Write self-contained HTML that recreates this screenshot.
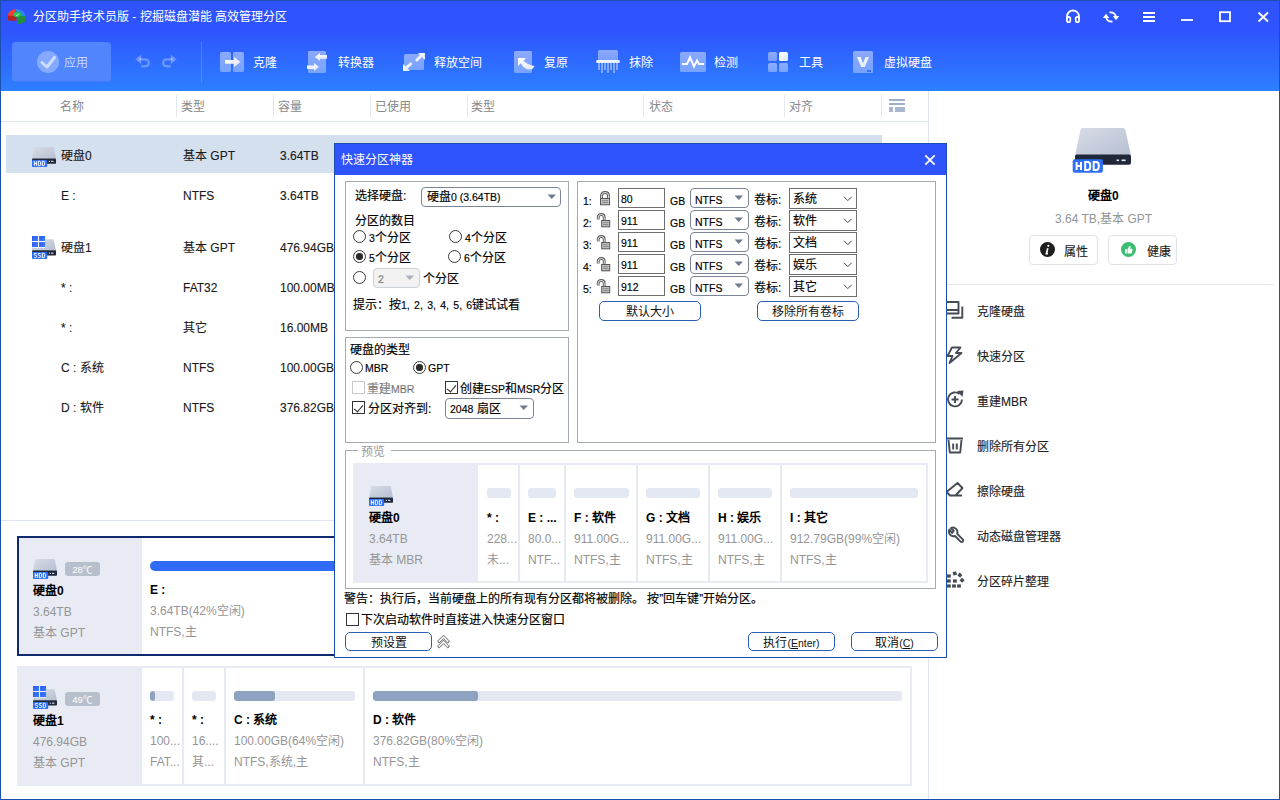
<!DOCTYPE html>
<html lang="zh-CN"><head><meta charset="utf-8">
<style>
*{box-sizing:border-box;margin:0;padding:0}
html,body{width:1280px;height:800px;overflow:hidden;background:#fff}
body{position:relative;font-family:"Liberation Sans",sans-serif;font-size:12px;line-height:14px;color:#222}
.a{position:absolute;white-space:nowrap}
#hdr{position:absolute;left:0;top:0;width:1280px;height:91px;background:linear-gradient(#2f54ff 0px,#2f54ff 30px,#2c80ff 91px)}
.wb{position:absolute;background:#1b50b0}
.tb{color:#fff;font-size:12px}
.col{color:#888;font-size:12px}
.sep{position:absolute;width:1px;background:#e3e7ee}
.row{color:#1a1a1a;font-size:12px;-webkit-text-stroke:0.12px #1a1a1a}
.gray{color:#8a8a8a}
.gb{border:1px solid #a5abb3}

.d{font-size:12px;color:#000;-webkit-text-stroke:0.15px #000}
.n{font-size:10.5px}
.cb{border:1px solid #7a8696;border-radius:4px;background:#fff}
.ip{border:1px solid #6e6e6e;background:#fff}
.rd{width:13px;height:13px;border:1.2px solid #3a3a3a;border-radius:50%;background:#fff}
.rd.on::after{content:"";position:absolute;left:2.3px;top:2.3px;width:6.5px;height:6.5px;border-radius:50%;background:#2a2a2a}
.ck{width:13px;height:13px;border:1px solid #333;background:#fff}
.ck.dis{border-color:#c8c8c8}
.ck.on::after{content:"";position:absolute;left:3px;top:0.5px;width:4px;height:8px;border:solid #222;border-width:0 1.3px 1.3px 0;transform:rotate(40deg)}
.bt{border:1px solid #2b5fb5;border-radius:5px;background:#fff;text-align:center;line-height:18px;padding-top:1px;font-size:12px;color:#111}
.pb{font-size:12px;font-weight:bold;color:#000}
.pg{font-size:12px;color:#959595}
.badge{width:35px;height:14px;border-radius:3px;background:#b7bfcc;color:#fff;font-size:9.5px;line-height:15px;text-align:center}
.rbtn{border:1px solid #dfe3ea;border-radius:4px;background:#fff}
.bold{font-weight:bold;color:#111}
</style></head><body>
<div id="hdr"></div>
<svg width="0" height="0" style="position:absolute"><defs>
 <linearGradient id="hg" x1="0" y1="0" x2="1" y2="1"><stop offset="0" stop-color="#d8dde7"/><stop offset="1" stop-color="#b6bed0"/></linearGradient>
 <linearGradient id="wq" x1="0" y1="0" x2="1" y2="1"><stop offset="0" stop-color="#2a55f5"/><stop offset="1" stop-color="#3a86f7"/></linearGradient>
 <symbol id="hdds" viewBox="0 0 24 20" overflow="visible">
  <path d="M2.8 0 L20.8 0 Q21.6 0 21.8 1 L24 11.6 L0.1 11.6 L2 1 Q2.2 0 2.8 0Z" fill="url(#hg)"/>
  <rect x="0.1" y="11.4" width="23.9" height="5.3" rx="0.8" fill="#1f2739"/>
  <rect x="16.8" y="13.8" width="1.2" height="1.1" fill="#dfe6f5"/><rect x="19" y="13.8" width="2.4" height="1.1" fill="#dfe6f5"/>
  <rect x="0" y="12.9" width="15.2" height="7.1" rx="1.1" fill="#2d6ff6"/>
  <g stroke="#fff" stroke-width="1" fill="none"><path d="M2.3 14.2 V18.8 M4.3 14.2 V18.8 M2.3 16.5 H4.3"/><path d="M6.3 14.2 H7.2 Q8.6 14.2 8.6 15.6 V17.4 Q8.6 18.8 7.2 18.8 H6.3 Z"/><path d="M10.3 14.2 H11.2 Q12.6 14.2 12.6 15.6 V17.4 Q12.6 18.8 11.2 18.8 H10.3 Z"/></g>
 </symbol>
 <symbol id="ssds" viewBox="0 0 24 23" overflow="visible">
  <path d="M13 3.2 L20.8 3.2 Q21.6 3.2 21.8 4.2 L24 14.4 L0.1 14.4 L0.1 12 L13 12 Z" fill="url(#hg)"/>
  <rect x="0" y="0" width="6" height="5" fill="url(#wq)"/><rect x="7.1" y="0" width="6" height="5" fill="url(#wq)"/><rect x="0" y="6.1" width="6" height="5" fill="url(#wq)"/><rect x="7.1" y="6.1" width="6" height="5" fill="url(#wq)"/>
  <rect x="0.1" y="14.2" width="23.9" height="5.3" rx="0.8" fill="#1f2739"/>
  <rect x="16.8" y="16.6" width="1.2" height="1.1" fill="#dfe6f5"/><rect x="19" y="16.6" width="2.4" height="1.1" fill="#dfe6f5"/>
  <rect x="0" y="15.9" width="15.2" height="7.1" rx="1.1" fill="#2d6ff6"/>
  <g stroke="#fff" stroke-width="1" fill="none"><path d="M4.6 17.4 H2.9 Q2.2 17.4 2.2 18.3 Q2.2 19.3 3.4 19.3 Q4.6 19.3 4.6 20.4 Q4.6 21.6 3.6 21.6 H2.2"/><path d="M8.6 17.4 H6.9 Q6.2 17.4 6.2 18.3 Q6.2 19.3 7.4 19.3 Q8.6 19.3 8.6 20.4 Q8.6 21.6 7.6 21.6 H6.2"/><path d="M10.3 17.2 H11.2 Q12.6 17.2 12.6 18.6 V20.4 Q12.6 21.8 11.2 21.8 H10.3 Z"/></g>
 </symbol>
 <symbol id="hddbig" viewBox="0 0 60 46" overflow="visible">
  <path d="M10.5 1 L51 1 Q53 1 53.4 3 L59 28.8 L3 28.8 L8.4 3 Q8.8 1 10.5 1Z" fill="url(#hg)"/>
  <rect x="3" y="27.5" width="56" height="10.3" rx="2" fill="#1f2739"/>
  <rect x="44.6" y="32.5" width="2.4" height="1.6" fill="#e4eaf7"/><rect x="49.6" y="32.5" width="4" height="1.6" fill="#e4eaf7"/>
  <rect x="0.7" y="32.3" width="30.2" height="13.4" rx="2" fill="#2d6ff6"/>
  <g stroke="#fff" stroke-width="2" fill="none"><path d="M4.6 35 V43 M9 35 V43 M4.6 39 H9"/><path d="M13.2 35 H15.5 Q18.2 35 18.2 37.8 V40.2 Q18.2 43 15.5 43 H13.2 Z"/><path d="M21.7 35 H24 Q26.7 35 26.7 37.8 V40.2 Q26.7 43 24 43 H21.7 Z"/></g>
 </symbol>
</defs></svg>

<!-- title -->
<div class="a tb" style="left:33px;top:10px;font-size:12px">分区助手技术员版 - 挖掘磁盘潜能 高效管理分区</div>


<!-- toolbar -->
<svg class="a" style="left:0;top:0" width="1280" height="91" viewBox="0 0 1280 91">
 <defs>
  <linearGradient id="ig" x1="0" y1="0" x2="0" y2="1"><stop offset="0" stop-color="#fff" stop-opacity="0.45"/><stop offset="1" stop-color="#fff" stop-opacity="0.35"/></linearGradient>
  <linearGradient id="wg" x1="0" y1="0" x2="1" y2="1"><stop offset="0" stop-color="#fff"/><stop offset="1" stop-color="#dfe6f6"/></linearGradient>
 </defs>
 <!-- logo -->
 <path d="M16 9 Q24.5 9 25.8 16.5 L16 16.5 Z" fill="#2d86ea"/>
 <path d="M8 14.5 Q9 10 15.5 9 L16 16 L8 16Z" fill="#f0403a"/>
 <path d="M8 15.5 L16.5 16 L16.5 20.5 Q11 21 8 20.5Z" fill="#b8231f"/>
 <path d="M17 16.2 L25 16 L25 22 Q21.5 24 17 24Z" fill="#20903e"/>
 <ellipse cx="17.2" cy="14.6" rx="4" ry="2.6" fill="#1fc24a"/>
 <path d="M15.6 14.8 L16.8 15.8 L18.8 13.6" stroke="#e8ffe8" stroke-width="0.9" fill="none"/>
 <!-- apply button -->
 <rect x="12" y="42" width="99" height="40" rx="4" fill="#5085fe"/>
 <rect x="14" y="81" width="95" height="1" fill="#2a5ad8" fill-opacity="0.25"/>
 <circle cx="48" cy="62" r="11" fill="#fff" fill-opacity="0.3"/>
 <path d="M42 62.5 L47 67 L54.5 57.5" stroke="#fff" stroke-opacity="0.6" stroke-width="3" fill="none" stroke-linecap="round" stroke-linejoin="round"/>
 <!-- undo redo -->
 <g stroke="#fff" stroke-opacity="0.3" stroke-width="2.2" fill="none" stroke-linecap="round">
  <path d="M140 59.3 L144.5 59.3 Q148.8 59.3 148.8 62.8 Q148.8 66.3 144.5 66.3 L142 66.3"/>
  <path d="M172 59.3 L167.5 59.3 Q163.2 59.3 163.2 62.8 Q163.2 66.3 167.5 66.3 L170 66.3"/>
 </g>
 <g fill="#fff" fill-opacity="0.3">
  <path d="M135.3 59.3 L141.2 54.6 L141.2 64 Z"/>
  <path d="M176.7 59.3 L170.8 54.6 L170.8 64 Z"/>
 </g>
 <rect x="201" y="42" width="1" height="40" fill="#fff" fill-opacity="0.18"/>
 <!-- clone -->
 <rect x="220" y="52" width="11" height="20" rx="1.5" fill="url(#ig)"/>
 <rect x="233" y="52" width="11" height="20" rx="1.5" fill="url(#ig)"/>
 <path d="M225 60 L234 60 L234 56.8 L240.5 62 L234 67 L234 63.8 L225 63.8Z" fill="url(#wg)"/>
 <!-- converter -->
 <rect x="308" y="51" width="18" height="22" rx="1.5" fill="url(#ig)"/>
 <path d="M327 55 L320 55 L320 53 L315 57 L320 61 L320 58.8 L327 58.8Z" fill="url(#wg)"/>
 <path d="M307 65.4 L314 65.4 L314 63 L319 67 L314 71 L314 68.9 L307 68.9Z" fill="url(#wg)"/>
 <!-- free space -->
 <rect x="404" y="54" width="20" height="16" rx="1.5" fill="url(#ig)"/>
 <path d="M418 53 L425 53 L425 60 Z" fill="url(#wg)"/>
 <path d="M403 64 L403 71 L410 71 Z" fill="url(#wg)"/>
  <path d="M406 68 L410.8 63.8" stroke="#e8eef8" stroke-width="3" stroke-linecap="round"/>
 <path d="M420.5 56.5 L416.8 60" stroke="#eef2fb" stroke-width="3" stroke-linecap="round"/>
 <!-- restore -->
 <rect x="514" y="51" width="18" height="22" rx="1.5" fill="url(#ig)"/>
 <path d="M518 58 L526 58 L523.5 60.8 Q528 65 534.5 66 Q533 70 529 69.5 Q524 69 520.8 63.2 L518 66 Z" fill="url(#wg)"/>
 <!-- wipe -->
 <rect x="598" y="50" width="20" height="11" rx="1.5" fill="url(#ig)"/>
 <g fill="#fff" fill-opacity="0.4">
  <rect x="598" y="63" width="2" height="7"/><rect x="601" y="63" width="2" height="10"/><rect x="604" y="63" width="2" height="7"/><rect x="607" y="63" width="2" height="10"/><rect x="610" y="63" width="2" height="7"/><rect x="613" y="63" width="2" height="10"/><rect x="616" y="63" width="2" height="7"/>
 </g>
 <rect x="596" y="60" width="24" height="3" rx="1.5" fill="url(#wg)"/>
 <!-- detect -->
 <rect x="680" y="52" width="26" height="20" rx="1.5" fill="url(#ig)"/>
 <path d="M682 64 L687 64 L690 57.5 L694 66.5 L697 60.5 L699 64 L704 64" stroke="#fff" stroke-width="2" fill="none" stroke-linejoin="miter"/>
 <!-- tools -->
 <rect x="768" y="52" width="9" height="9" rx="1.5" fill="url(#ig)"/>
 <rect x="779" y="52" width="9" height="9" rx="1.5" fill="url(#wg)"/>
 <rect x="768" y="63" width="9" height="9" rx="1.5" fill="url(#ig)"/>
 <rect x="779" y="63" width="9" height="9" rx="1.5" fill="url(#ig)"/>
 <!-- virtual disk -->
 <rect x="853" y="51" width="20" height="22" rx="1.5" fill="url(#ig)"/>
 <path d="M857 57 L860.5 57 L863 63.5 L865.5 57 L869 57 L864.8 67 L861.2 67Z" fill="url(#wg)"/>
 <rect x="867" y="70" width="4" height="2" fill="#2f6af5" fill-opacity="0.9"/>
 <!-- window controls -->
 <g stroke="#fff" stroke-width="1.8" fill="none">
  <path d="M1067 19.5 L1067 16.5 A6 6 0 0 1 1079 16.5 L1079 19.5"/>
  <rect x="1066.9" y="16.9" width="3.4" height="5.2" rx="1.7" stroke-width="1.7"/>
  <rect x="1075.7" y="16.9" width="3.4" height="5.2" rx="1.7" stroke-width="1.7"/>
  <path d="M1109.5 12.5 Q1114.5 12 1116 16.5"/>
  <path d="M1112.5 21.6 Q1107.5 22 1106 17.5"/>
  <path d="M1143 13 L1155 13 M1143 17 L1155 17 M1143 21 L1155 21"/>
  <path d="M1181 20 L1193 20"/>
  <rect x="1220" y="12.2" width="10" height="9"/>
  <path d="M1258.5 12.5 L1268 21.5 M1268 12.5 L1258.5 21.5"/>
 </g>
 <path d="M1112.8 16 L1119.2 16 L1116 20.3 Z" fill="#fff"/>
 <path d="M1102.8 18 L1109.2 18 L1106 13.7 Z" fill="#fff"/>
</svg>
<div class="a tb" style="left:64px;top:56px;color:rgba(255,255,255,0.7)">应用</div>
<div class="a tb" style="left:253px;top:56px">克隆</div>
<div class="a tb" style="left:338px;top:56px">转换器</div>
<div class="a tb" style="left:434px;top:56px">释放空间</div>
<div class="a tb" style="left:544px;top:56px">复原</div>
<div class="a tb" style="left:629px;top:56px">抹除</div>
<div class="a tb" style="left:714px;top:56px">检测</div>
<div class="a tb" style="left:799px;top:56px">工具</div>
<div class="a tb" style="left:884px;top:56px">虚拟硬盘</div>

<!-- column header -->
<div class="a col" style="left:60px;top:100px">名称</div>
<div class="a col" style="left:181px;top:100px">类型</div>
<div class="a col" style="left:278px;top:100px">容量</div>
<div class="a col" style="left:375px;top:100px">已使用</div>
<div class="a col" style="left:471px;top:100px">类型</div>
<div class="a col" style="left:649px;top:100px">状态</div>
<div class="a col" style="left:789px;top:100px">对齐</div>
<div class="sep" style="left:176px;top:95px;height:22px"></div>
<div class="sep" style="left:273px;top:95px;height:22px"></div>
<div class="sep" style="left:370px;top:95px;height:22px"></div>
<div class="sep" style="left:467px;top:95px;height:22px"></div>
<div class="sep" style="left:643px;top:95px;height:22px"></div>
<div class="sep" style="left:784px;top:95px;height:22px"></div>
<div class="sep" style="left:881px;top:95px;height:22px"></div>
<div class="a" style="left:0;top:121px;width:928px;height:1px;background:#dfe5ee"></div>
<svg class="a" style="left:889px;top:99px" width="16" height="13"><rect x="0" y="0" width="16" height="2" fill="#9fb0ca"/><rect x="0" y="4" width="16" height="2" fill="#9fb0ca"/><rect x="0" y="8" width="4" height="5" fill="#a9b8d0"/><rect x="6" y="8" width="10" height="5" fill="#a9b8d0"/></svg>
<div class="a" style="left:928px;top:91px;width:1px;height:709px;background:#dfe5ee"></div>

<!-- selected row -->
<div class="a" style="left:6px;top:135px;width:876px;height:38px;background:#d5e0ef"></div>
<div class="a row" style="left:61px;top:149px">硬盘0</div>
<div class="a row" style="left:183px;top:149px">基本 GPT</div>
<div class="a row" style="left:280px;top:149px">3.64TB</div>

<div class="a row" style="left:61px;top:189px">E :</div>
<div class="a row" style="left:183px;top:189px">NTFS</div>
<div class="a row" style="left:280px;top:189px">3.64TB</div>

<div class="a row" style="left:61px;top:241px">硬盘1</div>
<div class="a row" style="left:183px;top:241px">基本 GPT</div>
<div class="a row" style="left:280px;top:241px">476.94GB</div>

<div class="a row" style="left:61px;top:281px">* :</div>
<div class="a row" style="left:183px;top:281px">FAT32</div>
<div class="a row" style="left:280px;top:281px">100.00MB</div>

<div class="a row" style="left:61px;top:321px">* :</div>
<div class="a row" style="left:183px;top:321px">其它</div>
<div class="a row" style="left:280px;top:321px">16.00MB</div>

<div class="a row" style="left:61px;top:361px">C : 系统</div>
<div class="a row" style="left:183px;top:361px">NTFS</div>
<div class="a row" style="left:280px;top:361px">100.00GB</div>

<div class="a row" style="left:61px;top:401px">D : 软件</div>
<div class="a row" style="left:183px;top:401px">NTFS</div>
<div class="a row" style="left:280px;top:401px">376.82GB</div>

<div class="a" style="left:0;top:520px;width:928px;height:1px;background:#dfe5ee"></div>



<!-- list icons -->
<svg class="a" style="left:32px;top:147px" width="24" height="20"><use href="#hdds"/></svg>
<svg class="a" style="left:32px;top:236px" width="24" height="23"><use href="#ssds"/></svg>

<!-- bottom disk cards -->
<div class="a" style="left:17px;top:536px;width:895px;height:120px;border:2px solid #0f2a6e;background:#fff"></div>
<div class="a" style="left:19px;top:538px;width:123px;height:116px;background:#e8ebf3"></div>
<svg class="a" style="left:33px;top:559px" width="24" height="20"><use href="#hdds"/></svg>
<div class="a badge" style="left:65px;top:562px">28℃</div>
<div class="a pb" style="left:33px;top:584px">硬盘0</div>
<div class="a pg" style="left:33px;top:605px">3.64TB</div>
<div class="a pg" style="left:33px;top:626px">基本 GPT</div>
<div class="a" style="left:150px;top:561px;width:752px;height:10px;border-radius:5px;background:#2f6bf5"></div>
<div class="a pb" style="left:150px;top:583px">E :</div>
<div class="a pg" style="left:150px;top:604px">3.64TB(42%空闲)</div>
<div class="a pg" style="left:150px;top:625px">NTFS,主</div>

<div class="a" style="left:17px;top:666px;width:895px;height:120px;background:#e8ebf3"></div>
<div class="a" style="left:142px;top:668px;width:768px;height:116px;background:#fff"></div>
<div class="a" style="left:182px;top:668px;width:2px;height:116px;background:#e6eaf2"></div>
<div class="a" style="left:224px;top:668px;width:2px;height:116px;background:#e6eaf2"></div>
<div class="a" style="left:363px;top:668px;width:2px;height:116px;background:#e6eaf2"></div>
<svg class="a" style="left:33px;top:686px" width="24" height="23"><use href="#ssds"/></svg>
<div class="a badge" style="left:65px;top:692px">49℃</div>
<div class="a pb" style="left:33px;top:714px">硬盘1</div>
<div class="a pg" style="left:33px;top:735px">476.94GB</div>
<div class="a pg" style="left:33px;top:756px">基本 GPT</div>
<div class="a" style="left:150px;top:691px;width:24px;height:10px;border-radius:3px;background:#e3e8f2;overflow:hidden"><div style="width:5px;height:10px;border-radius:3px;background:#8da2bf"></div></div>
<div class="a pb" style="left:150px;top:713px">* :</div>
<div class="a pg" style="left:150px;top:734px">100...</div>
<div class="a pg" style="left:150px;top:755px">FAT...</div>
<div class="a" style="left:192px;top:691px;width:24px;height:10px;border-radius:3px;background:#e3e8f2;overflow:hidden"></div>
<div class="a pb" style="left:192px;top:713px">* :</div>
<div class="a pg" style="left:192px;top:734px">16....</div>
<div class="a pg" style="left:192px;top:755px">其...</div>
<div class="a" style="left:234px;top:691px;width:121px;height:10px;border-radius:3px;background:#e3e8f2;overflow:hidden"><div style="width:41px;height:10px;border-radius:3px;background:#8da2bf"></div></div>
<div class="a pb" style="left:234px;top:713px">C : 系统</div>
<div class="a pg" style="left:234px;top:734px">100.00GB(64%空闲)</div>
<div class="a pg" style="left:234px;top:755px">NTFS,系统,主</div>
<div class="a" style="left:373px;top:691px;width:529px;height:10px;border-radius:3px;background:#e3e8f2;overflow:hidden"><div style="width:105px;height:10px;border-radius:3px;background:#8da2bf"></div></div>
<div class="a pb" style="left:373px;top:713px">D : 软件</div>
<div class="a pg" style="left:373px;top:734px">376.82GB(80%空闲)</div>
<div class="a pg" style="left:373px;top:755px">NTFS,主</div>


<!-- right panel -->
<svg class="a" style="left:1072px;top:127px" width="60" height="46"><use href="#hddbig"/></svg>
<div class="a pb" style="left:1088px;top:189px">硬盘0</div>
<div class="a pg" style="left:1055px;top:212px">3.64 TB,基本 GPT</div>
<div class="a rbtn" style="left:1029px;top:235px;width:69px;height:30px"></div>
<svg class="a" style="left:1039px;top:241px" width="17" height="17"><circle cx="8.5" cy="8.5" r="7.5" fill="#1f1f1f"/><circle cx="9.3" cy="4.8" r="1.1" fill="#fff"/><path d="M8.8 7.2 L7.4 12.6 L9 12.6" stroke="#fff" stroke-width="1.7" fill="none"/></svg>
<div class="a row" style="left:1064px;top:245px">属性</div>
<div class="a rbtn" style="left:1108px;top:235px;width:69px;height:30px"></div>
<svg class="a" style="left:1120px;top:241px" width="17" height="17"><circle cx="8.5" cy="8.5" r="7.5" fill="#3dbd72"/><path d="M5 8 L6.8 8 L6.8 12.5 L5 12.5Z M7.5 12.5 L7.5 8 L9.5 5 Q10.5 4.5 10.5 6 L10 7.8 L12 7.8 Q12.8 8 12.5 9 L11.8 12 Q11.5 12.5 11 12.5Z" fill="#fff"/></svg>
<div class="a row" style="left:1147px;top:245px">健康</div>
<div class="a" style="left:947px;top:284px;width:327px;height:1px;background:#e3e8f0"></div>
<div class="a row" style="left:977px;top:305px;color:#222">克隆硬盘</div>
<div class="a row" style="left:977px;top:350px;color:#222">快速分区</div>
<div class="a row" style="left:977px;top:395px;color:#222">重建MBR</div>
<div class="a row" style="left:977px;top:440px;color:#222">删除所有分区</div>
<div class="a row" style="left:977px;top:485px;color:#222">擦除硬盘</div>
<div class="a row" style="left:977px;top:530px;color:#222">动态磁盘管理器</div>
<div class="a row" style="left:977px;top:575px;color:#222">分区碎片整理</div>
<svg class="a" style="left:940px;top:290px" width="35" height="310" viewBox="940 290 35 310">
<g stroke="#454b55" stroke-width="1.9" fill="none" stroke-linejoin="round">
 <path d="M946 302 L958.5 302 L958.5 313.5 L946 313.5 M946 310 L958.5 310"/><path d="M962.3 306.5 L962.3 317.8 L951.5 317.8"/>
 <path d="M960.5 347.5 L952 347.5 L947.5 356 L952.5 356 L949.5 363 L961.5 353 L956 353 Z"/>
 <path d="M962 399.5 A7 7 0 1 1 959.5 394"/><path d="M951.5 399.5 L958.5 399.5 M955 396 L955 403"/></g><path d="M957 391 L963.5 390.5 L962.5 397 Z" fill="#454b55"/><g stroke="#454b55" stroke-width="1.9" fill="none" stroke-linejoin="round">
 <path d="M947 438.5 L963 438.5 M948.5 440 L949.8 452.5 L960.2 452.5 L961.5 440 M953.2 443.5 L953.2 449.5 M956.8 443.5 L956.8 449.5"/>
 <path d="M957.5 483 L962.5 488 L955.5 495.5 L950 495.5 L946.5 492 Z M950 495.5 L962 495.5"/>
 <path d="M949.5 529.5 A4.6 4.6 0 0 0 955 536 L960.8 541.8 A1.6 1.6 0 0 0 963 539.6 L957.2 533.8 A4.6 4.6 0 0 0 951 528 L953.8 531 L952.2 533 Z"/>
</g>
<g fill="#454b55">
 <rect x="947" y="584.4" width="3.8" height="3.2"/><rect x="952.1" y="584.4" width="3.8" height="3.2"/><rect x="957.1" y="584.4" width="3.8" height="3.2"/>
 <rect x="947" y="579.4" width="3.8" height="3.2"/><rect x="953" y="579.4" width="3.8" height="3.2"/>
 <rect x="947" y="574.4" width="3.8" height="3.2"/>
 <rect x="953" y="571.6" width="3.6" height="3.6" transform="rotate(-15 954.8 573.4)"/>
 <rect x="958.1" y="573.3" width="3.6" height="3.6" transform="rotate(40 959.9 575.1)"/>
 <rect x="960.3" y="578.5" width="3.6" height="3.6" transform="rotate(40 962.1 580.3)"/>
</g>
</svg>

<!-- ============ DIALOG ============ -->
<div id="dlg" class="a" style="left:334px;top:143px;width:613px;height:515px;background:#fff;border:1px solid #1d4fae;font-size:12px;color:#111">
</div>
<div class="a" style="left:335px;top:144px;width:611px;height:31px;background:#2f54fe"></div>
<div class="a" style="left:341px;top:153px;color:#fff;font-size:12px">快速分区神器</div>
<svg class="a" style="left:920px;top:150px" width="20" height="20"><path d="M5.3 5.3 L14.7 14.7 M14.7 5.3 L5.3 14.7" stroke="#fff" stroke-width="1.8"/></svg>
<!-- group boxes -->
<div class="a gb" style="left:345px;top:181px;width:224px;height:150px"></div>
<div class="a gb" style="left:345px;top:337px;width:224px;height:106px"></div>
<div class="a gb" style="left:577px;top:181px;width:359px;height:262px"></div>
<div class="a gb" style="left:345px;top:450px;width:591px;height:139px"></div>


<!-- group1 content -->
<div class="a d" style="left:355px;top:189px">选择硬盘:</div>
<div class="a cb" style="left:421px;top:187px;width:140px;height:20px"></div>
<div class="a d" style="left:427px;top:190px">硬盘<span class="n">0 (3.64TB)</span></div>
<svg class="a" style="left:547px;top:194px" width="10" height="6"><path d="M0.5 0.5 L9 0.5 L4.75 5Z" fill="#6e7b8d"/></svg>
<div class="a d" style="left:355px;top:214px">分区的数目</div>
<div class="a rd" style="left:353px;top:230px"></div><div class="a d" style="left:369px;top:231px"><span class="n">3</span>个分区</div>
<div class="a rd" style="left:449px;top:230px"></div><div class="a d" style="left:465px;top:231px"><span class="n">4</span>个分区</div>
<div class="a rd on" style="left:353px;top:250px"></div><div class="a d" style="left:369px;top:251px"><span class="n">5</span>个分区</div>
<div class="a rd" style="left:448px;top:250px"></div><div class="a d" style="left:464px;top:251px"><span class="n">6</span>个分区</div>
<div class="a rd" style="left:353px;top:271px"></div>
<div class="a" style="left:373px;top:268px;width:47px;height:20px;border:1px solid #cdd2d8;border-radius:4px;background:#f2f2f2"></div>
<div class="a d" style="left:378px;top:272px;color:#a8a8a8"><span class="n">2</span></div>
<svg class="a" style="left:405px;top:275px" width="10" height="6"><path d="M0.5 0.5 L9 0.5 L4.75 5Z" fill="#a7b0bb"/></svg>
<div class="a d" style="left:423px;top:272px">个分区</div>
<div class="a d" style="left:353px;top:298px">提示：按<span class="n" style="word-spacing:1.4px">1, 2, 3, 4, 5, 6</span>键试试看</div>
<!-- group2 -->
<div class="a d" style="left:350px;top:343px">硬盘的类型</div>
<div class="a rd" style="left:350px;top:361px"></div><div class="a d" style="left:365px;top:361px"><span class="n">MBR</span></div>
<div class="a rd on" style="left:413px;top:361px"></div><div class="a d" style="left:428px;top:361px"><span class="n">GPT</span></div>
<div class="a ck dis" style="left:352px;top:381px"></div><div class="a d" style="left:367px;top:382px;color:#9a9a9a">重建<span class="n">MBR</span></div>
<div class="a ck on" style="left:445px;top:381px"></div><div class="a d" style="left:460px;top:382px">创建<span class="n">ESP</span>和<span class="n">MSR</span>分区</div>
<div class="a ck on" style="left:352px;top:401px"></div><div class="a d" style="left:368px;top:402px">分区对齐到:</div>
<div class="a cb" style="left:445px;top:398px;width:89px;height:21px"></div>
<div class="a d" style="left:450px;top:402px"><span class="n">2048</span> 扇区</div>
<svg class="a" style="left:519px;top:405px" width="10" height="6"><path d="M0.5 0.5 L9 0.5 L4.75 5Z" fill="#6e7b8d"/></svg>
<div class="a d" style="left:583px;top:194px"><span class="n">1:</span></div>
<svg class="a" style="left:596px;top:191px" width="16" height="17"><use href="#lk"/></svg>
<div class="a ip" style="left:618px;top:188px;width:47px;height:20px"></div><div class="a d" style="left:621px;top:192px"><span class="n">80</span></div>
<div class="a d" style="left:670px;top:194px"><span class="n">GB</span></div>
<div class="a cb" style="left:690px;top:188px;width:59px;height:20px"></div><div class="a d" style="left:695px;top:193px"><span class="n">NTFS</span></div>
<svg class="a" style="left:734px;top:195px" width="10" height="6"><path d="M0.5 0.5 L9 0.5 L4.75 5Z" fill="#6e7b8d"/></svg>
<div class="a d" style="left:754px;top:193px">卷标:</div>
<div class="a ip" style="left:789px;top:188px;width:68px;height:21px"></div><div class="a d" style="left:793px;top:192px">系统</div>
<svg class="a" style="left:843px;top:196px" width="10" height="6"><path d="M1 0.8 L4.8 4.6 L8.6 0.8" stroke="#444" stroke-width="1" fill="none"/></svg>
<div class="a d" style="left:583px;top:216px"><span class="n">2:</span></div>
<svg class="a" style="left:596px;top:213px" width="16" height="17"><use href="#ulk"/></svg>
<div class="a ip" style="left:618px;top:210px;width:47px;height:20px"></div><div class="a d" style="left:621px;top:214px"><span class="n">911</span></div>
<div class="a d" style="left:670px;top:216px"><span class="n">GB</span></div>
<div class="a cb" style="left:690px;top:210px;width:59px;height:20px"></div><div class="a d" style="left:695px;top:215px"><span class="n">NTFS</span></div>
<svg class="a" style="left:734px;top:217px" width="10" height="6"><path d="M0.5 0.5 L9 0.5 L4.75 5Z" fill="#6e7b8d"/></svg>
<div class="a d" style="left:754px;top:215px">卷标:</div>
<div class="a ip" style="left:789px;top:210px;width:68px;height:21px"></div><div class="a d" style="left:793px;top:214px">软件</div>
<svg class="a" style="left:843px;top:218px" width="10" height="6"><path d="M1 0.8 L4.8 4.6 L8.6 0.8" stroke="#444" stroke-width="1" fill="none"/></svg>
<div class="a d" style="left:583px;top:238px"><span class="n">3:</span></div>
<svg class="a" style="left:596px;top:235px" width="16" height="17"><use href="#ulk"/></svg>
<div class="a ip" style="left:618px;top:232px;width:47px;height:20px"></div><div class="a d" style="left:621px;top:236px"><span class="n">911</span></div>
<div class="a d" style="left:670px;top:238px"><span class="n">GB</span></div>
<div class="a cb" style="left:690px;top:232px;width:59px;height:20px"></div><div class="a d" style="left:695px;top:237px"><span class="n">NTFS</span></div>
<svg class="a" style="left:734px;top:239px" width="10" height="6"><path d="M0.5 0.5 L9 0.5 L4.75 5Z" fill="#6e7b8d"/></svg>
<div class="a d" style="left:754px;top:237px">卷标:</div>
<div class="a ip" style="left:789px;top:232px;width:68px;height:21px"></div><div class="a d" style="left:793px;top:236px">文档</div>
<svg class="a" style="left:843px;top:240px" width="10" height="6"><path d="M1 0.8 L4.8 4.6 L8.6 0.8" stroke="#444" stroke-width="1" fill="none"/></svg>
<div class="a d" style="left:583px;top:260px"><span class="n">4:</span></div>
<svg class="a" style="left:596px;top:257px" width="16" height="17"><use href="#ulk"/></svg>
<div class="a ip" style="left:618px;top:254px;width:47px;height:20px"></div><div class="a d" style="left:621px;top:258px"><span class="n">911</span></div>
<div class="a d" style="left:670px;top:260px"><span class="n">GB</span></div>
<div class="a cb" style="left:690px;top:254px;width:59px;height:20px"></div><div class="a d" style="left:695px;top:259px"><span class="n">NTFS</span></div>
<svg class="a" style="left:734px;top:261px" width="10" height="6"><path d="M0.5 0.5 L9 0.5 L4.75 5Z" fill="#6e7b8d"/></svg>
<div class="a d" style="left:754px;top:259px">卷标:</div>
<div class="a ip" style="left:789px;top:254px;width:68px;height:21px"></div><div class="a d" style="left:793px;top:258px">娱乐</div>
<svg class="a" style="left:843px;top:262px" width="10" height="6"><path d="M1 0.8 L4.8 4.6 L8.6 0.8" stroke="#444" stroke-width="1" fill="none"/></svg>
<div class="a d" style="left:583px;top:282px"><span class="n">5:</span></div>
<svg class="a" style="left:596px;top:279px" width="16" height="17"><use href="#ulk"/></svg>
<div class="a ip" style="left:618px;top:276px;width:47px;height:20px"></div><div class="a d" style="left:621px;top:280px"><span class="n">912</span></div>
<div class="a d" style="left:670px;top:282px"><span class="n">GB</span></div>
<div class="a cb" style="left:690px;top:276px;width:59px;height:20px"></div><div class="a d" style="left:695px;top:281px"><span class="n">NTFS</span></div>
<svg class="a" style="left:734px;top:283px" width="10" height="6"><path d="M0.5 0.5 L9 0.5 L4.75 5Z" fill="#6e7b8d"/></svg>
<div class="a d" style="left:754px;top:281px">卷标:</div>
<div class="a ip" style="left:789px;top:276px;width:68px;height:21px"></div><div class="a d" style="left:793px;top:280px">其它</div>
<svg class="a" style="left:843px;top:284px" width="10" height="6"><path d="M1 0.8 L4.8 4.6 L8.6 0.8" stroke="#444" stroke-width="1" fill="none"/></svg>

<div class="a bt" style="left:599px;top:301px;width:102px;height:20px">默认大小</div>
<div class="a bt" style="left:757px;top:301px;width:102px;height:20px">移除所有卷标</div>
<svg width="0" height="0" style="position:absolute"><defs>
 <g id="lk"><path d="M5.5 7.5 L5.5 4.5 Q5.5 1.5 9 1.5 Q12.5 1.5 12.5 4.5 L12.5 7.5" stroke="#5a5a5a" stroke-width="2.8" fill="none"/><path d="M5.5 7.5 L5.5 4.5 Q5.5 1.5 9 1.5 Q12.5 1.5 12.5 4.5 L12.5 7.5" stroke="#f4f4f4" stroke-width="0.9" fill="none"/><rect x="4.5" y="7.5" width="9" height="6.3" fill="#c4c4c4" stroke="#555" stroke-width="1"/><path d="M6 9.7 H12 M6 11.6 H12" stroke="#808080" stroke-width="0.9"/></g>
 <g id="ulk"><path d="M2.2 6.5 L2.2 4.2 Q2.2 1.5 5.2 1.5 Q8.2 1.5 8.2 4.2 L8.2 8" stroke="#5a5a5a" stroke-width="2.8" fill="none"/><path d="M2.2 6.5 L2.2 4.2 Q2.2 1.5 5.2 1.5 Q8.2 1.5 8.2 4.2 L8.2 8" stroke="#f4f4f4" stroke-width="0.9" fill="none"/><rect x="5.7" y="7.5" width="8" height="6.3" fill="#c4c4c4" stroke="#555" stroke-width="1"/><path d="M7 9.7 H12.5 M7 11.6 H12.5" stroke="#808080" stroke-width="0.9"/></g>
</defs></svg>

<!-- preview -->
<div class="a" style="left:358px;top:446px;width:33px;height:10px;background:#fff"></div>
<div class="a d" style="left:361px;top:445px;color:#999;-webkit-text-stroke:0">预览</div>
<div class="a" style="left:353px;top:463px;width:575px;height:120px;background:#e8ebf3"></div>
<div class="a" style="left:478px;top:465px;width:448px;height:116px;background:#fff"></div>
<div class="a" style="left:518px;top:465px;width:2px;height:116px;background:#e6eaf2"></div>
<div class="a" style="left:564px;top:465px;width:2px;height:116px;background:#e6eaf2"></div>
<div class="a" style="left:636px;top:465px;width:2px;height:116px;background:#e6eaf2"></div>
<div class="a" style="left:708px;top:465px;width:2px;height:116px;background:#e6eaf2"></div>
<div class="a" style="left:780px;top:465px;width:2px;height:116px;background:#e6eaf2"></div>
<svg class="a" style="left:369px;top:486px" width="24" height="20"><use href="#hdds"/></svg>
<div class="a pb" style="left:369px;top:511px">硬盘0</div>
<div class="a pg" style="left:369px;top:532px">3.64TB</div>
<div class="a pg" style="left:369px;top:553px">基本 MBR</div>
<div class="a" style="left:487px;top:488px;width:24px;height:10px;border-radius:3px;background:#e3e8f2"></div>
<div class="a pb" style="left:487px;top:511px">* :</div>
<div class="a pg" style="left:487px;top:532px">228...</div>
<div class="a pg" style="left:487px;top:553px">未...</div>
<div class="a" style="left:528px;top:488px;width:28px;height:10px;border-radius:3px;background:#e3e8f2"></div>
<div class="a pb" style="left:528px;top:511px">E : ...</div>
<div class="a pg" style="left:528px;top:532px">80.0...</div>
<div class="a pg" style="left:528px;top:553px">NTF...</div>
<div class="a" style="left:574px;top:488px;width:55px;height:10px;border-radius:3px;background:#e3e8f2"></div>
<div class="a pb" style="left:574px;top:511px">F : 软件</div>
<div class="a pg" style="left:574px;top:532px">911.00G...</div>
<div class="a pg" style="left:574px;top:553px">NTFS,主</div>
<div class="a" style="left:646px;top:488px;width:54px;height:10px;border-radius:3px;background:#e3e8f2"></div>
<div class="a pb" style="left:646px;top:511px">G : 文档</div>
<div class="a pg" style="left:646px;top:532px">911.00G...</div>
<div class="a pg" style="left:646px;top:553px">NTFS,主</div>
<div class="a" style="left:718px;top:488px;width:54px;height:10px;border-radius:3px;background:#e3e8f2"></div>
<div class="a pb" style="left:718px;top:511px">H : 娱乐</div>
<div class="a pg" style="left:718px;top:532px">911.00G...</div>
<div class="a pg" style="left:718px;top:553px">NTFS,主</div>
<div class="a" style="left:790px;top:488px;width:128px;height:10px;border-radius:3px;background:#e3e8f2"></div>
<div class="a pb" style="left:790px;top:511px">I : 其它</div>
<div class="a pg" style="left:790px;top:532px">912.79GB(99%空闲)</div>
<div class="a pg" style="left:790px;top:553px">NTFS,主</div>

<div class="a d" style="left:344px;top:592px">警告：执行后，当前硬盘上的所有现有分区都将被删除。 按”回车键”开始分区。</div>
<div class="a ck" style="left:346px;top:613px"></div>
<div class="a d" style="left:361px;top:613px">下次启动软件时直接进入快速分区窗口</div>
<div class="a bt" style="left:345px;top:632px;width:87px;height:19px">预设置</div>
<svg class="a" style="left:432px;top:630px" width="24" height="22" viewBox="432 630 24 22"><g fill="#f2f2f2" stroke="#5a5a5a" stroke-width="0.9"><path d="M443.5 640.2 L449 645.7 L449 647 L447.6 647.8 L443.5 643.7 L439.4 647.8 L438 647 L438 645.7 Z"/><path d="M443.5 635.2 L449 640.7 L449 642 L447.6 642.8 L443.5 638.7 L439.4 642.8 L438 642 L438 640.7 Z"/></g></svg>
<div class="a bt" style="left:748px;top:632px;width:87px;height:19px">执行<span class="n">(<u>E</u>nter)</span></div>
<div class="a bt" style="left:851px;top:632px;width:87px;height:19px">取消<span class="n">(<u>C</u>)</span></div>

<!-- window borders -->
<div class="wb" style="left:0;top:0;width:1280px;height:1px"></div>
<div class="wb" style="left:0;top:0;width:1px;height:800px"></div>
<div class="wb" style="left:1279px;top:0;width:1px;height:800px"></div>
<div class="wb" style="left:0;top:799px;width:1280px;height:1px"></div>
</body></html>
